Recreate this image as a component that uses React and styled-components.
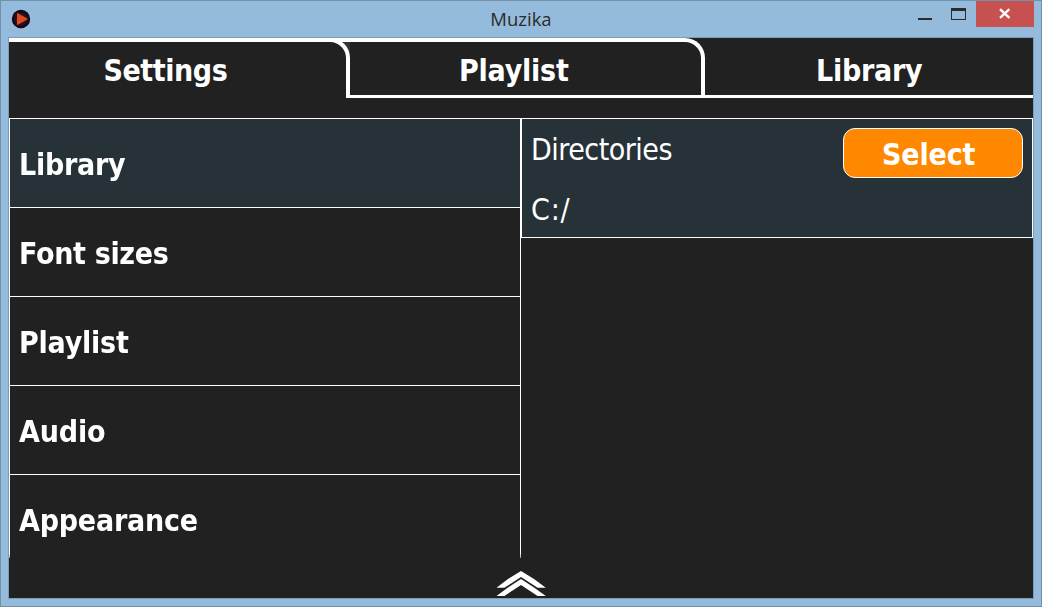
import React from "react";
import styled, { createGlobalStyle } from "styled-components";

const Global = createGlobalStyle`
  * { box-sizing: border-box; }
  body { margin: 0; overflow: hidden; }
`;

const Window = styled.div`
  width: 1042px;
  height: 607px;
  display: flex;
  flex-direction: column;
  padding: 0 7px 7px;
  background: #94bbdb;
  border: 1px solid #7191ab;
  font-family: "DejaVu Sans Condensed", "DejaVu Sans", sans-serif;
  font-stretch: condensed;
  color: #fff;
`;

const TitleBar = styled.header`
  height: 36px;
  flex: none;
  display: grid;
  grid-template-columns: 130px 1fr 130px;
  align-items: start;
`;

const AppIcon = styled.svg`
  display: block;
  margin: 8px 0 0 3px;
`;

const Title = styled.h1`
  margin: 4px 0 0;
  font: 400 18.5px/27px "Open Sans", sans-serif;
  text-align: center;
  color: #2b2b2b;
`;

const WindowControls = styled.div`
  display: flex;
  justify-content: flex-end;
`;

const WindowButton = styled.button`
  width: ${(p) => p.$width}px;
  height: 26px;
  padding: 0;
  border: 0;
  background: ${(p) => p.$background || "transparent"};
  svg { display: block; }
`;

const Client = styled.main`
  width: 1026px;
  height: 562px;
  flex: none;
  display: flex;
  flex-direction: column;
  border: 1px solid #7c9db8;
  background: #212121;
`;

const Tabs = styled.nav`
  display: flex;
  height: 60px;
  flex: none;
`;

const TabSlot = styled.div`
  width: ${(p) => p.$width}px;
  background: ${(p) => (p.$joined ? "linear-gradient(#fff 4px, #333 4px)" : "#212121")};
`;

const Tab = styled.div`
  height: 60px;
  border: 0 solid #fff;
  border-width: ${(p) => (p.$last ? "0" : "4px 4px 0 0")};
  border-top-right-radius: ${(p) => (p.$last ? 0 : 20)}px;
  background: #212121;
  box-shadow: ${(p) => (p.$active ? "none" : "inset 0 -3px #fff")};
  padding-left: ${(p) => p.$indent}px;
  padding-top: ${(p) => (p.$last ? 15 : 11)}px;
`;

const Label = styled.span`
  display: block;
  font-size: 30px;
  line-height: 36px;
  font-weight: ${(p) => (p.$light ? 400 : 700)};
  letter-spacing: ${(p) => p.$track || 0}px;
  white-space: nowrap;
`;

const Content = styled.div`
  display: flex;
  height: 440px;
  margin-top: 20px;
  overflow: hidden;
`;

const Menu = styled.ul`
  width: 512px;
  height: 440px;
  margin: 0;
  padding: 0;
  list-style: none;
  border: 1px solid #fff;
  border-bottom: 0;
  overflow: hidden;
  mask-image: linear-gradient(#000 435px, rgba(0, 0, 0, 0.55) 440px);
`;

const MenuItem = styled.li`
  height: 89px;
  padding: 28px 0 0 9px;
  border-bottom: 1px solid #fff;
  background: ${(p) => (p.$active ? "#263238" : "#212121")};
`;

const Panel = styled.section`
  width: 512px;
  height: 120px;
  display: flex;
  justify-content: space-between;
  padding: 9px;
  border: 1px solid #fff;
  background: #263238;
`;

const Directories = styled.div`
  display: flex;
  flex-direction: column;
  gap: 24px;
  padding-top: 4px;
`;

const SelectButton = styled.button`
  width: 180px;
  height: 50px;
  padding: 3px 0 0 38px;
  border: 1px solid #fff;
  border-radius: 12px;
  background: #ff8800;
  color: #fff;
  font-family: inherit;
  font-stretch: inherit;
  text-align: left;
`;

const Footer = styled.footer`
  height: 40px;
  display: flex;
  justify-content: center;
`;

const items = [
  ["Library", -0.25],
  ["Font sizes", -0.32],
  ["Playlist", -0.22],
  ["Audio", -0.15],
  ["Appearance", -0.22],
];

export default function App() {
  return (
    <>
      <Global />
      <Window>
        <TitleBar>
          <AppIcon width="20" height="20" viewBox="0 0 20 20">
            <defs>
              <radialGradient id="disc">
                <stop offset="0" stopColor="#4a1d4c" />
                <stop offset="1" stopColor="#0b060c" />
              </radialGradient>
            </defs>
            <circle cx="10" cy="10" r="9.2" fill="url(#disc)" />
            <path d="M6 3.7L17 10L6 16.3Z" fill="#e04a18" />
          </AppIcon>
          <Title>Muzika</Title>
          <WindowControls>
            <WindowButton $width={34} aria-label="Minimize">
              <svg width="34" height="26"><path d="M10 17H24V19H10Z" fill="#2b2b2b" /></svg>
            </WindowButton>
            <WindowButton $width={34} aria-label="Maximize">
              <svg width="34" height="26"><path fillRule="evenodd" d="M9 7H24V19H9ZM10 10V18H23V10Z" fill="#2b2b2b" /></svg>
            </WindowButton>
            <WindowButton $width={58} $background="#c75050" aria-label="Close">
              <svg width="58" height="26"><path d="M24 8.2L33.4 16.8M33.4 8.2L24 16.8" stroke="#fff" strokeWidth="2.4" /></svg>
            </WindowButton>
          </WindowControls>
        </TitleBar>
        <Client>
          <Tabs>
            <TabSlot $width={341} $joined>
              <Tab $active $indent={94.5}><Label $track={-0.45}>Settings</Label></Tab>
            </TabSlot>
            <TabSlot $width={355}>
              <Tab $indent={109}><Label $track={-0.22}>Playlist</Label></Tab>
            </TabSlot>
            <TabSlot $width={328}>
              <Tab $last $indent={111}><Label $track={-0.25}>Library</Label></Tab>
            </TabSlot>
          </Tabs>
          <Content>
            <Menu>
              {items.map(([name, track], i) => (
                <MenuItem key={name} $active={i === 0}><Label $track={track}>{name}</Label></MenuItem>
              ))}
            </Menu>
            <Panel>
              <Directories>
                <Label $light $track={-0.5}>Directories</Label>
                <Label $light $track={0.8}>C:/</Label>
              </Directories>
              <SelectButton><Label $track={-0.15}>Select</Label></SelectButton>
            </Panel>
          </Content>
          <Footer>
            <svg width="50" height="40" viewBox="0 0 50 40">
              <path d="M0.5 29.8L12 21L25 13L38 21L49.8 29.8H41.6L25 19L8.4 29.8ZM0.5 38L12 29.5L25 21L38 29.5L49.8 38H41.6L25 27L8.4 38Z" fill="#fff" />
            </svg>
          </Footer>
        </Client>
      </Window>
    </>
  );
}
